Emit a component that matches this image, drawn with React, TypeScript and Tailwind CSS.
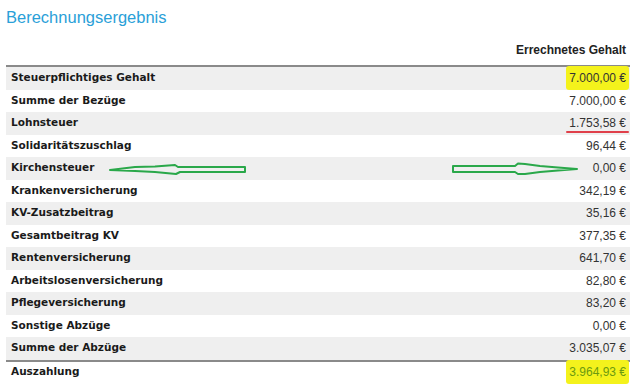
import React from "react";

type Row = { label: string; value: string; mark?: "yellow" | "red" | "green" };

const rows: Row[] = [
  { label: "Steuerpflichtiges Gehalt", value: "7.000,00 €", mark: "yellow" },
  { label: "Summe der Bezüge", value: "7.000,00 €" },
  { label: "Lohnsteuer", value: "1.753,58 €", mark: "red" },
  { label: "Solidaritätszuschlag", value: "96,44 €" },
  { label: "Kirchensteuer", value: "0,00 €" },
  { label: "Krankenversicherung", value: "342,19 €" },
  { label: "KV-Zusatzbeitrag", value: "35,16 €" },
  { label: "Gesamtbeitrag KV", value: "377,35 €" },
  { label: "Rentenversicherung", value: "641,70 €" },
  { label: "Arbeitslosenversicherung", value: "82,80 €" },
  { label: "Pflegeversicherung", value: "83,20 €" },
  { label: "Sonstige Abzüge", value: "0,00 €" },
  { label: "Summe der Abzüge", value: "3.035,07 €" },
];

function Value({ row }: { row: Row }) {
  if (row.mark === "yellow") {
    return (
      <span className="relative inline-block">
        <span className="absolute -left-[3px] -right-[3px] -top-[3px] -bottom-[3px] rounded-[3px] bg-[#f4f21c]" />
        <span className="relative">{row.value}</span>
      </span>
    );
  }
  if (row.mark === "red") {
    return (
      <span className="relative inline-block">
        <span className="relative">{row.value}</span>
        <span className="absolute -left-[3px] -right-[3px] top-[17px] h-[2px] rounded bg-[#e0404a]" />
      </span>
    );
  }
  return <span>{row.value}</span>;
}

export default function App() {
  return (
    <div className="w-[640px] h-[387px] bg-white overflow-hidden relative">
      <div
        className="pl-[6px] pt-[7px] h-[30px] text-[16.5px] leading-[20px] text-[#2aa0d8]"
        style={{ fontFamily: '"Liberation Sans", Arial, sans-serif' }}
      >
        Berechnungsergebnis
      </div>
      <div className="ml-[6px] w-[624px]">
        <div
          className="h-[37px] flex items-end justify-end pr-[4px] pb-[6px] text-[12px] font-bold text-[#222] border-b-2 border-[#8a8a8a]"
          style={{ fontFamily: '"Liberation Sans", Arial, sans-serif' }}
        >
          Errechnetes Gehalt
        </div>
        {rows.map((r, i) => (
          <div
            key={r.label}
            className={`relative h-[22.5px] flex items-center justify-between pl-[5px] pr-[4px] ${
              i % 2 === 0 ? "bg-[#efefef]" : "bg-white"
            }`}
          >
            <span
              className="text-[10.5px] font-bold text-[#1a1a1a]"
              style={{ fontFamily: '"DejaVu Sans", Verdana, sans-serif' }}
            >
              {r.label}
            </span>
            <span
              className="text-[12px] text-[#333]"
              style={{ fontFamily: '"Liberation Sans", Arial, sans-serif' }}
            >
              <Value row={r} />
            </span>
          </div>
        ))}
        <div className="h-[23px] flex items-center justify-between pl-[5px] pr-[4px] border-t-2 border-[#8a8a8a]">
          <span
            className="text-[10.5px] font-bold text-[#1a1a1a]"
            style={{ fontFamily: '"DejaVu Sans", Verdana, sans-serif' }}
          >
            Auszahlung
          </span>
          <span
            className="text-[12px] text-[#6b9a10]"
            style={{ fontFamily: '"Liberation Sans", Arial, sans-serif' }}
          >
            <span className="relative inline-block">
              <span className="absolute -left-[3px] -right-[3px] -top-[3px] -bottom-[3px] rounded-[3px] bg-[#f4f21c]" />
              <span className="relative">3.964,93 €</span>
            </span>
          </span>
        </div>
      </div>
      {/* left arrow */}
      <svg className="absolute left-[100px] top-[158px]" width="160" height="22" viewBox="0 0 160 22">
        <path
          d="M10 12 L35 9 L55 8.5 L75 7 L78 9 L145 9 L145 14 L80 14 L76 16 L55 14 L35 13 Z"
          fill="none"
          stroke="#2aa84a"
          strokeWidth="2"
          strokeLinejoin="round"
        />
      </svg>
      {/* right arrow */}
      <svg className="absolute left-[440px] top-[158px]" width="160" height="22" viewBox="0 0 160 22">
        <path
          d="M13 8 L75 8 L78 5.5 L85 6 L100 8 L118 9.5 L137 11 L118 12.5 L100 14 L85 16 L78 16 L75 14 L13 14 Z"
          fill="none"
          stroke="#2aa84a"
          strokeWidth="2"
          strokeLinejoin="round"
        />
      </svg>
    </div>
  );
}
